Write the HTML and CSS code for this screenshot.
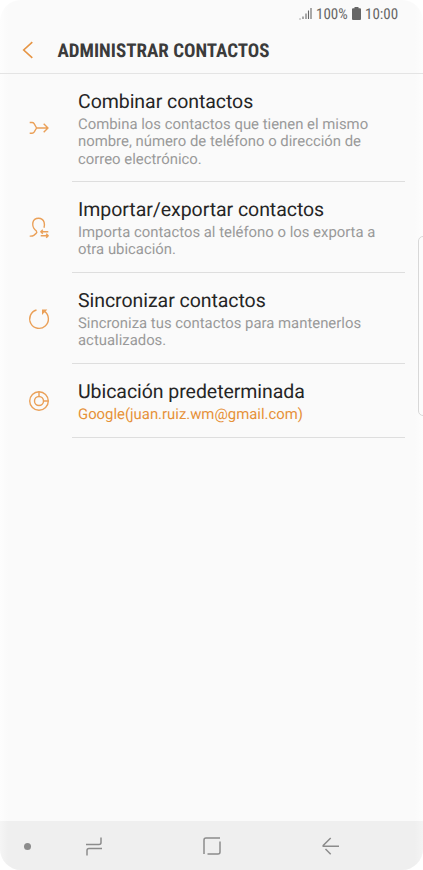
FILE: index.html
```html
<!DOCTYPE html>
<html lang="es">
<head>
<meta charset="utf-8">
<title>Administrar contactos</title>
<link rel="stylesheet" href="styles.css">
</head>
<body>
<div class="phone">
  <header class="top">
    <div class="status">
      <svg class="signal" width="13" height="13" viewBox="0 0 13 13"><path d="M.5 12h1M4 12V9.500M7 12V6.500M9.500 12V3.500M12 12V1"/></svg>
      <span class="battery-text">100%</span>
      <svg class="battery" width="9" height="13" viewBox="0 0 9 13"><path d="M2.500 0h4v1.200H8q1 0 1 1V12q0 1-1 1H1q-1 0-1-1V2.200q0-1 1-1h1.500z"/></svg>
      <span class="clock">10:00</span>
    </div>
    <div class="bar">
      <svg class="back" width="12" height="18" viewBox="0 0 12 18"><path d="M10.300 1.200 1.700 9l8.600 7.800"/></svg>
      <h1 class="heading">ADMINISTRAR CONTACTOS</h1>
    </div>
  </header>
  <main class="list">
    <section class="row">
      <svg class="icon" width="24" height="24" viewBox="0 0 24 24"><path d="M2.700 6.500h2.400q1.300 0 2 1.100L9.600 12l-2.500 4.200q-.7 1.100-2 1.100H2.700M9.600 12h11.200M16.700 7.700 21 12l-4.300 4.300"/></svg>
      <div class="text"><h2 class="title">Combinar contactos</h2><p class="sub">Combina los contactos que tienen el mismo<br>nombre, número de teléfono o dirección de<br>correo electrónico.</p></div>
    </section>
    <section class="row">
      <svg class="icon" width="24" height="24" viewBox="0 0 24 24"><path d="M17 11.800c.6-1.900.6-3.700.1-5.500C16.300 3.600 14.200 2.200 11.500 2.200S6.500 3.800 5.900 6.500c-.5 2.700.1 5.200 1.900 7.100l1.600 1.500q1 1.200-.3 2.300l-2 1.700Q5.500 20.300 2.700 20.100M21.300 15.700h-7.500M15.800 13.700l-2 2 2 2M13.700 19.700h7.500M19.200 17.700l2 2-2 2"/></svg>
      <div class="text"><h2 class="title">Importar/exportar contactos</h2><p class="sub">Importa contactos al teléfono o los exporta a<br>otra ubicación.</p></div>
    </section>
    <section class="row">
      <svg class="icon" width="24" height="24" viewBox="0 0 24 24"><path d="M9.500 3A9.350 9.350 0 1 0 17.500 4.400"/><path class="fill" d="M15 2.600h5.300l-1.800 1.800-1.700 1.700L15 8z"/></svg>
      <div class="text"><h2 class="title">Sincronizar contactos</h2><p class="sub">Sincroniza tus contactos para mantenerlos<br>actualizados.</p></div>
    </section>
    <section class="row">
      <svg class="icon" width="24" height="24" viewBox="0 0 24 24"><circle cx="12" cy="12" r="9.300"/><circle cx="12" cy="12" r="4.500"/><path d="M12 2.700v4.800M16.500 12h4.800"/></svg>
      <div class="text"><h2 class="title">Ubicación predeterminada</h2><p class="sub account">Google(juan.ruiz.wm@gmail.com)</p></div>
    </section>
  </main>
  <nav class="nav">
    <span class="dot"></span>
    <svg class="recent" width="18" height="20" viewBox="0 0 18 20"><path d="M1 8.500h13q2 0 2-2V1.500M17 12.500H4q-2 0-2 2v5"/></svg>
    <svg class="home" width="18" height="18" viewBox="0 0 18 18"><path d="M17 1H3Q1 1 1 3v14M17 4.500V15q0 2-2 2H4.500"/></svg>
    <svg class="return" width="18" height="18" viewBox="0 0 18 18"><path d="M8.700 1 1.200 8.500q-.4.700.4.700H17M3.500 12l5.200 5.200"/></svg>
  </nav>
  <div class="edge"></div>
</div>
</body>
</html>
```
FILE: styles.css
```css
* { box-sizing: border-box; }
body { margin: 0; background: #fff; font-family: Roboto, "Liberation Sans", sans-serif; text-rendering: geometricPrecision; }
h1, h2, p { margin: 0; font-weight: 400; }
svg { display: block; flex: none; fill: none; }
.phone { position: relative; display: flex; flex-direction: column; width: 423px; height: 870px; overflow: hidden; border-radius: 21px; background: linear-gradient(90deg, #fdfdfd, #fafafa 8px, #fafafa 415px, #fdfdfd); }
.top { height: 74px; border-bottom: 1px solid #e4e4e4; }
.status { display: flex; align-items: center; height: 27px; padding-left: 299px; color: #666; font: 400 15px/18px "Roboto Condensed", Roboto, sans-serif; font-stretch: 75%; }
.signal { stroke: #666; stroke-width: 1.1; }
.battery-text { width: 32px; margin-left: 4px; }
.battery { margin-left: 4px; fill: #666; }
.clock { margin-left: 4px; }
.bar { display: flex; align-items: center; height: 46px; padding-left: 22px; }
.back { stroke: #e69544; stroke-width: 1.6; }
.heading { margin-left: 23.500px; padding-top: 1px; color: #3b3b3b; font: 700 19px/24px "Roboto Condensed", Roboto, sans-serif; font-stretch: 75%; white-space: nowrap; }
.list { flex: 1; }
.row { display: flex; align-items: center; height: 91px; padding-left: 27px; }
.row:first-child { height: 108px; }
.row:last-child { height: 74px; }
.icon { stroke: #eaa058; stroke-width: 1.4; stroke-linejoin: round; }
.fill { fill: #eaa058; stroke: none; }
.text { width: 333px; height: 100%; margin-left: 21px; padding: 15px 0 0 6px; border-bottom: 1px solid #dedede; white-space: nowrap; }
.title { color: #252525; font-size: 19.500px; line-height: 25px; letter-spacing: -.05px; }
.sub { margin-top: 2px; color: #999; font-size: 14.880px; line-height: 17.350px; }
.account { color: #e69138; }
.nav { display: flex; align-items: center; height: 49px; padding: 1px 0 0 24px; background: linear-gradient(90deg, #f5f5f5, #efefef 8px, #efefef 415px, #f4f4f4); }
.nav svg { stroke: #8c8c8c; stroke-width: 1.5; }
.dot { width: 7px; height: 7px; border-radius: 50%; background: #8c8c8c; }
.recent { margin-left: 54px; }
.home { margin-left: 100px; }
.return { margin-left: 101px; }
.edge { position: absolute; top: 236px; right: -5px; width: 10px; height: 180px; border: 1px solid #d8d8d8; border-radius: 5px; background: #fcfcfc; }
```
